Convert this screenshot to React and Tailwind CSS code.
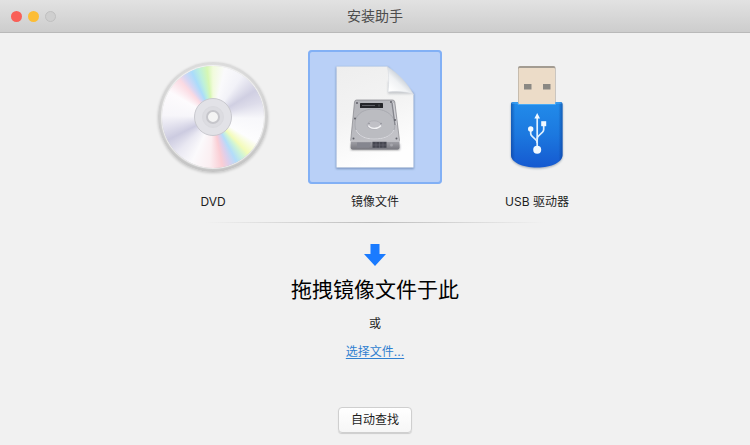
import { useState } from "react";

function DiscIcon() {
  return (
    <span className="flex size-[110px] items-center justify-center rounded-full bg-linear-to-b from-[#dcdcdc] to-[#c4c4c4] shadow-[0_1px_3px_rgba(0,0,0,0.2)]">
      <span className="flex size-[102px] items-center justify-center rounded-full bg-[conic-gradient(#f1fbdc_0deg,#fafafc_14deg,#f2f2f8_35deg,#d0cfe2_58deg,#dddcea_72deg,#f8f8fb_92deg,#fdfdfe_120deg,#f3fbb9_136deg,#cdf3d8_143deg,#b3ddfa_152deg,#dccfec_161deg,#facdd4_169deg,#fbeff2_184deg,#fbfafc_205deg,#e9e8f2_225deg,#cccbe0_243deg,#dcdbea_254deg,#f7f6fa_272deg,#fdfbfd_300deg,#fbdae2_318deg,#d7d6f3_325deg,#aadcfb_335deg,#bdf0dc_344deg,#d6f7b4_353deg,#f1fbdc_360deg)] shadow-[0_0_1px_1px_rgba(255,255,255,0.7)]">
        <span className="flex size-[38px] items-center justify-center rounded-full border border-[#c9c9cf] bg-[#e2e2e7]">
          <span className="flex size-[22px] items-center justify-center rounded-full border border-[#dadadf] bg-[#dcdce1]">
            <span className="size-[14px] rounded-full border-2 border-[#c6c6cb] bg-[#f4f4f4]" />
          </span>
        </span>
      </span>
    </span>
  );
}

function ImageFileIcon() {
  return (
    <svg viewBox="0 0 134 134" className="size-full" aria-hidden="true">
      <defs>
        <linearGradient id="paper" x1="0" y1="0" x2="0.3" y2="1">
          <stop offset="0" stopColor="#eeeeee" />
          <stop offset="0.5" stopColor="#f3f3f3" />
          <stop offset="1" stopColor="#fefefe" />
        </linearGradient>
        <linearGradient id="fold" x1="0.15" y1="0.9" x2="0.6" y2="0.4">
          <stop offset="0" stopColor="#ffffff" />
          <stop offset="0.6" stopColor="#f0f2f4" />
          <stop offset="1" stopColor="#c9d0d8" />
        </linearGradient>
        <linearGradient id="lid" x1="0" y1="0" x2="1" y2="1">
          <stop offset="0" stopColor="#b2b3b8" />
          <stop offset="1" stopColor="#c4c4c9" />
        </linearGradient>
        <linearGradient id="front" x1="0" y1="0" x2="0" y2="1">
          <stop offset="0" stopColor="#a6a6ac" />
          <stop offset="1" stopColor="#77777e" />
        </linearGradient>
        <filter id="soft" x="-20%" y="-20%" width="140%" height="140%">
          <feGaussianBlur stdDeviation="1.2" />
        </filter>
      </defs>
      <path d="M28 17H80L106 44V119H28Z" fill="#45648f" opacity="0.55" filter="url(#soft)" />
      <path d="M28.500 16.500H79L105.500 44V117.500H28.500Z" fill="url(#paper)" />
      <path d="M80 31V44H105L94 38Z" fill="#8a9098" opacity="0.4" filter="url(#soft)" />
      <path d="M79 16.500C81 21 81 33 80 42C89 41 99 41.500 105.500 44.500C100 34 90 23 79 16.500Z" fill="url(#fold)" stroke="#d2d6dc" strokeWidth="0.5" />
      <path d="M43 94H91.500V100H43Z" fill="#3a3a40" opacity="0.6" filter="url(#soft)" />
      <path d="M48.500 50H84.500Q86.500 50 86.800 52L91.500 90.500H42.700L46.500 52Q46.800 50 48.500 50Z" fill="url(#lid)" stroke="#85858b" strokeWidth="0.7" />
      <path d="M42.700 90.500H91.500V97.500Q91.500 99.500 89.500 99.500H44.700Q42.700 99.500 42.700 97.500Z" fill="url(#front)" />
      <path d="M43 91H91.200" stroke="#dcdce0" strokeWidth="1" />
      <path d="M49 92.500H63L61 97.500H49Z" fill="#85868f" />
      <rect x="64.500" y="91.800" width="14" height="6" fill="#45464f" />
      <path d="M68 92V98M71.500 92V98M75 92V98M64.500 95H78.500" stroke="#72737c" strokeWidth="0.5" />
      <circle cx="83.500" cy="95" r="1.500" fill="#a6a6ac" />
      <path d="M48 80C44 68 52 59 66 59C80 59 90 68 86 80C82 87 75 89 66 89C57 89 51 86 48 80Z" fill="#bbbcc1" stroke="#a5a6ac" strokeWidth="0.8" />
      <path d="M48 80C51 86 57 89 66 89C75 89 82 87 86 80" fill="none" stroke="#e0e0e4" strokeWidth="0.9" />
      <ellipse cx="66" cy="75" rx="7" ry="4.200" fill="#c0c0c6" stroke="#a4a5ac" strokeWidth="0.5" />
      <path d="M60.500 75.500C62 79 70 79.500 73 75.500" fill="none" stroke="#f4f4f6" strokeWidth="1.300" />
      <circle cx="61" cy="73.500" r="0.800" fill="#8f9097" />
      <circle cx="73" cy="73.500" r="0.800" fill="#8f9097" />
      <rect x="52" y="53" width="23" height="5" rx="0.600" fill="#242529" />
      <path d="M54 55.500H67M71 54.500V56.500" stroke="#65666c" strokeWidth="0.900" />
      <path d="M84 53L87 75" stroke="#85868d" strokeWidth="1.300" />
      <path d="M85.500 53L88.500 75" stroke="#dedee3" strokeWidth="0.700" />
      <g fill="#606168">
        <circle cx="49" cy="53" r="1" />
        <circle cx="83" cy="52" r="1" />
        <circle cx="47" cy="68.500" r="1" />
        <circle cx="87" cy="70" r="1" />
        <circle cx="45.500" cy="88.500" r="1" />
        <circle cx="88.500" cy="88.500" r="1" />
      </g>
    </svg>
  );
}

function UsbIcon() {
  return (
    <svg viewBox="0 0 134 134" className="size-full" aria-hidden="true">
      <defs>
        <linearGradient id="body" x1="0" y1="0" x2="0" y2="1">
          <stop offset="0" stopColor="#228cea" />
          <stop offset="0.5" stopColor="#1c78df" />
          <stop offset="1" stopColor="#1559d0" />
        </linearGradient>
        <linearGradient id="sides" x1="0" y1="0" x2="1" y2="0">
          <stop offset="0" stopColor="#0b3d91" stopOpacity="0.55" />
          <stop offset="0.08" stopColor="#0b3d91" stopOpacity="0" />
          <stop offset="0.92" stopColor="#0b3d91" stopOpacity="0" />
          <stop offset="1" stopColor="#0b3d91" stopOpacity="0.55" />
        </linearGradient>
        <filter id="usbShadow" x="-20%" y="-20%" width="140%" height="140%">
          <feGaussianBlur stdDeviation="1" />
        </filter>
      </defs>
      <path d="M41 54H92.500V106C92.500 113 82 118.500 67 118.500S41 113 41 106Z" fill="#38516f" opacity="0.45" filter="url(#usbShadow)" />
      <rect x="48" y="16" width="37.500" height="39" rx="2" fill="#a39c92" />
      <rect x="48.500" y="18" width="36.500" height="37" rx="1" fill="#ecdcc8" />
      <rect x="54" y="34" width="7.500" height="5.500" fill="#8a8883" />
      <rect x="73" y="34" width="7.500" height="5.500" fill="#8a8883" />
      <path d="M43 52H48V54H85.500V52H90.500Q92.500 52 92.500 54V105C92.500 112 82 117.500 67 117.500S41 112 41 105V54Q41 52 43 52Z" fill="url(#body)" />
      <path d="M43 52H48V54H85.500V52H90.500Q92.500 52 92.500 54V105C92.500 112 82 117.500 67 117.500S41 112 41 105V54Q41 52 43 52Z" fill="url(#sides)" />
      <path d="M42 53H48V54.500H85.500V53H91.500" fill="none" stroke="#48aaf6" strokeWidth="1" />
      <g fill="none" stroke="#dff0ff" strokeWidth="1.700">
        <path d="M67.200 98V66" />
        <path d="M60.700 80V83.500Q60.700 85 62 86.200L66 90Q67.200 91.200 67.200 93" />
        <path d="M73.700 75V79.500Q73.700 81 72.500 82.200L68.500 86Q67.200 87.200 67.200 89" />
      </g>
      <g fill="#f2f9ff">
        <circle cx="67.200" cy="99.700" r="4" />
        <path d="M67.200 63L70 68.500H64.400Z" />
        <circle cx="60.700" cy="79" r="2.700" />
        <rect x="71.200" y="71.200" width="5" height="5" />
      </g>
    </svg>
  );
}

const sources = [
  { id: "dvd", label: "DVD", Icon: DiscIcon },
  { id: "image", label: "镜像文件", Icon: ImageFileIcon },
  { id: "usb", label: "USB 驱动器", Icon: UsbIcon },
];

export default function App() {
  const [selected, setSelected] = useState("image");

  return (
    <div className="flex min-h-screen flex-col bg-[#f1f1f1] font-[family-name:Inter,'Noto_Sans_CJK_SC',sans-serif] text-xs text-[#1e1e1e]">
      <header className="grid h-[33px] grid-cols-[1fr_auto_1fr] items-center border-b border-[#b9b9b9] bg-linear-to-b from-[#e2e2e2] to-[#cdcdcd] px-[11px]">
        <div className="flex gap-[6px]">
          <button aria-label="关闭" className="size-[11px] rounded-full bg-[#f95f57]" />
          <button aria-label="最小化" className="size-[11px] rounded-full bg-[#fcbd36]" />
          <button aria-label="缩放" disabled className="size-[11px] rounded-full border border-[#c0c0c0] bg-[#cfcfcf]" />
        </div>
        <h1 className="text-sm text-[#4c4c4c]">安装助手</h1>
      </header>

      <main className="flex flex-1 flex-col items-center pt-[17px] pb-3">
        <div className="flex justify-center gap-7">
          {sources.map(({ id, label, Icon }) => (
            <button
              key={id}
              aria-pressed={selected === id}
              onClick={() => setSelected(id)}
              className="group flex flex-col items-center gap-2"
            >
              <span className="flex size-[134px] items-center justify-center rounded-[4px] group-aria-pressed:bg-[#b9d0f7] group-aria-pressed:inset-ring-2 group-aria-pressed:inset-ring-[#82b0f5]">
                <Icon />
              </span>
              <span className="leading-5">{label}</span>
            </button>
          ))}
        </div>

        <hr className="mt-[10px] h-px w-[340px] border-0 bg-linear-to-r from-transparent via-[#bcbcbc] to-transparent" />

        <svg viewBox="0 0 22 22" className="mt-[21px] size-[22px]" aria-hidden="true">
          <path d="M6.500 0H15.500V10H22L11 22L0 10H6.500Z" fill="#1a7bff" />
        </svg>
        <h2 className="mt-2 text-[21px] leading-8 text-black">拖拽镜像文件于此</h2>
        <p className="mt-2 leading-5">或</p>
        <a href="#choose" className="mt-2 leading-5 text-[#2f7fd0] underline underline-offset-2">
          选择文件...
        </a>

        <button className="mt-auto h-[26px] rounded-[4px] border border-[#cfcfcf] bg-linear-to-b from-white to-[#f6f6f6] px-3 shadow-[0_1px_1px_rgba(0,0,0,0.15)]">
          自动查找
        </button>
      </main>
    </div>
  );
}
